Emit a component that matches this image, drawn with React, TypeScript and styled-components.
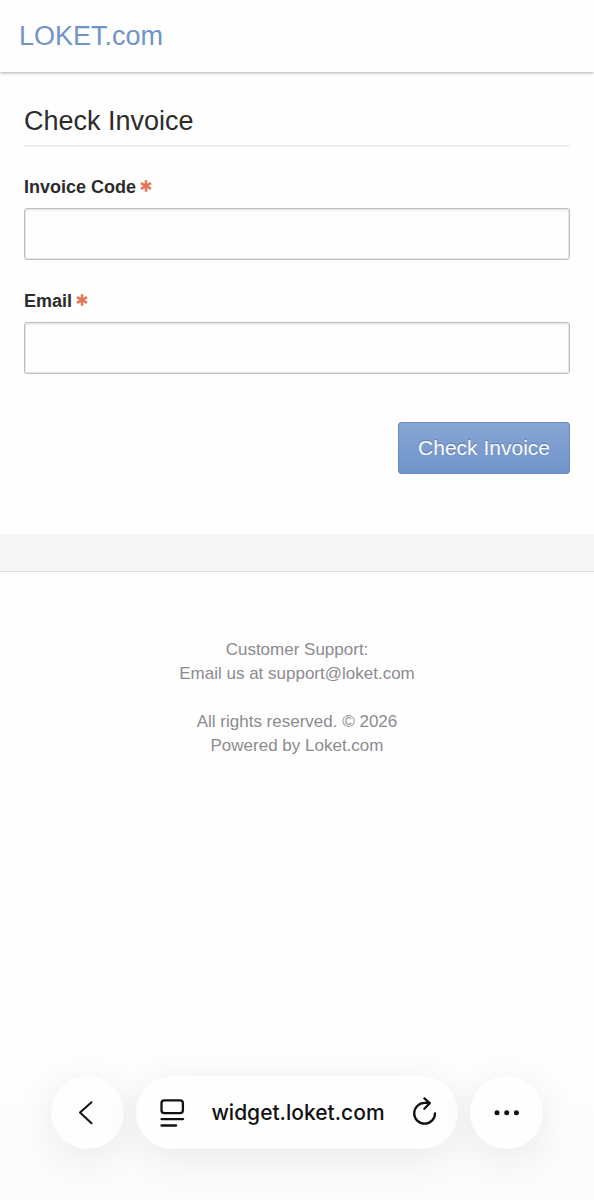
import React from "react";
import styled, { createGlobalStyle } from "styled-components";

const GlobalStyle = createGlobalStyle`
  *, *::before, *::after { box-sizing: border-box; }
  body {
    margin: 0;
    background: #fefefe;
    color: #2c2c2c;
    font-family: "Liberation Sans", Arial, sans-serif;
  }
`;

const Page = styled.div`
  display: flex;
  flex-direction: column;
  min-height: 100vh;
`;

const Header = styled.header`
  display: flex;
  align-items: center;
  height: 72px;
  padding: 0 19px;
  background: #fefefe;
  box-shadow: 0 1px 3px rgba(0, 0, 0, 0.32);
`;

const Brand = styled.a`
  color: #7094c8;
  font-size: 27px;
  line-height: 32px;
  text-decoration: none;
`;

const Main = styled.main`
  padding: 32px 24px 60px;
`;

const Title = styled.h1`
  margin: 0 0 27px;
  padding-bottom: 7px;
  border-bottom: 2px solid #f0f0f0;
  font-size: 27px;
  font-weight: 400;
  line-height: 34px;
`;

const Form = styled.form`
  display: flex;
  flex-direction: column;
`;

const Field = styled.div`
  display: flex;
  flex-direction: column;
  gap: 8px;
  margin-bottom: 28px;
`;

const Label = styled.label`
  display: flex;
  align-items: center;
  gap: 4px;
  font-size: 18px;
  font-weight: 700;
  line-height: 26px;
`;

const Star = styled.svg`
  width: 12px;
  height: 12px;
  margin-bottom: 3px;
  fill: none;
  stroke: #e57358;
  stroke-width: 2.5;
`;

const Input = styled.input`
  width: 100%;
  height: 52px;
  padding: 0 12px;
  border: 1px solid #bfbfc2;
  border-radius: 3px;
  background: #fefefe;
  box-shadow: inset 0 0 0 1px #e6e6e8, inset 0 2px 2px rgba(0, 0, 0, 0.06);
  font: inherit;
  font-size: 21px;
`;

const Submit = styled.button`
  align-self: flex-end;
  height: 52px;
  margin-top: 20px;
  padding: 0 19px;
  border: 1px solid #6c8bbd;
  border-radius: 3px;
  background: linear-gradient(#87a6d4, #7093ca);
  color: #fafcff;
  font: inherit;
  font-size: 21px;
  text-shadow: 0 -1px 1px rgba(0, 0, 0, 0.25);
`;

const Band = styled.div`
  height: 38px;
  border-bottom: 1px solid #dedede;
  background: #f6f6f6;
`;

const Footer = styled.footer`
  padding: 66px 24px 40px;
  color: #8c8b8e;
  font-size: 17px;
  line-height: 24px;
  text-align: center;

  p { margin: 0 0 24px; }
`;

const BrowserBar = styled.nav`
  position: sticky;
  bottom: 0;
  display: flex;
  gap: 12px;
  margin-top: auto;
  padding: 40px 51px 51px;
  background: linear-gradient(rgba(251, 251, 251, 0), #fbfbfb);
`;

const RoundButton = styled.button`
  display: grid;
  place-items: center;
  flex: none;
  width: 73px;
  height: 73px;
  padding: 0;
  border: 0;
  border-radius: 50%;
  background: #fefefe;
  box-shadow: 0 8px 40px rgba(0, 0, 0, 0.08);
  color: #111;
`;

const AddressBar = styled.div`
  display: flex;
  flex: 1;
  align-items: center;
  justify-content: space-between;
  min-width: 0;
  height: 73px;
  padding: 0 18px 0 20px;
  border-radius: 37px;
  background: #fefefe;
  box-shadow: 0 8px 40px rgba(0, 0, 0, 0.08);
  color: #111;
`;

const IconButton = styled.button`
  display: grid;
  place-items: center;
  padding: 0;
  border: 0;
  background: none;
  color: inherit;
`;

const Address = styled.span`
  font-family: Inter, sans-serif;
  font-size: 21px;
  font-weight: 500;
  line-height: 28px;
`;

const Icon = styled.svg`
  display: block;
  width: 32px;
  height: 32px;
  fill: none;
  stroke: currentColor;
  stroke-width: 2.3;
  stroke-linecap: round;
  stroke-linejoin: round;
`;

const Required = () => (
  <Star viewBox="0 0 12 12" role="img" aria-label="required">
    <path d="M6 .2v11.6M1 3.1l10 5.8M11 3.1L1 8.9" />
  </Star>
);

export default function App() {
  return (
    <>
      <GlobalStyle />
      <Page>
        <Header>
          <Brand href="#">LOKET.com</Brand>
        </Header>
        <Main>
          <Title>Check Invoice</Title>
          <Form onSubmit={(e) => e.preventDefault()}>
            <Field>
              <Label htmlFor="invoice-code">Invoice Code<Required /></Label>
              <Input id="invoice-code" type="text" />
            </Field>
            <Field>
              <Label htmlFor="email">Email<Required /></Label>
              <Input id="email" type="email" />
            </Field>
            <Submit type="submit">Check Invoice</Submit>
          </Form>
        </Main>
        <Band />
        <Footer>
          <p>Customer Support:<br />Email us at support@loket.com</p>
          <p>All rights reserved. © 2026<br />Powered by Loket.com</p>
        </Footer>
        <BrowserBar aria-label="Browser">
          <RoundButton type="button" aria-label="Back">
            <Icon viewBox="0 0 32 32"><path d="M19.5 5.2L8 15.6l11.5 10.6" strokeWidth="2" /></Icon>
          </RoundButton>
          <AddressBar>
            <IconButton type="button" aria-label="Page menu">
              <Icon viewBox="0 0 32 32">
                <rect x="5.5" y="3.3" width="21.4" height="12.8" rx="2.8" />
                <path d="M5.5 22.1h21.6M5.5 28.5h14.6" />
              </Icon>
            </IconButton>
            <Address>widget.loket.com</Address>
            <IconButton type="button" aria-label="Reload">
              <Icon viewBox="0 0 32 32">
                <path d="M27 16.3a10.4 10.4 0 1 1-10.4-10.4h5.2M16.4 1.4l5.4 4.7-5.4 5.6" />
              </Icon>
            </IconButton>
          </AddressBar>
          <RoundButton type="button" aria-label="More">
            <Icon viewBox="0 0 32 32">
              <g fill="currentColor" stroke="none">
                <circle cx="6" cy="15.7" r="2.5" />
                <circle cx="15.7" cy="15.7" r="2.5" />
                <circle cx="25.4" cy="15.7" r="2.5" />
              </g>
            </Icon>
          </RoundButton>
        </BrowserBar>
      </Page>
    </>
  );
}
